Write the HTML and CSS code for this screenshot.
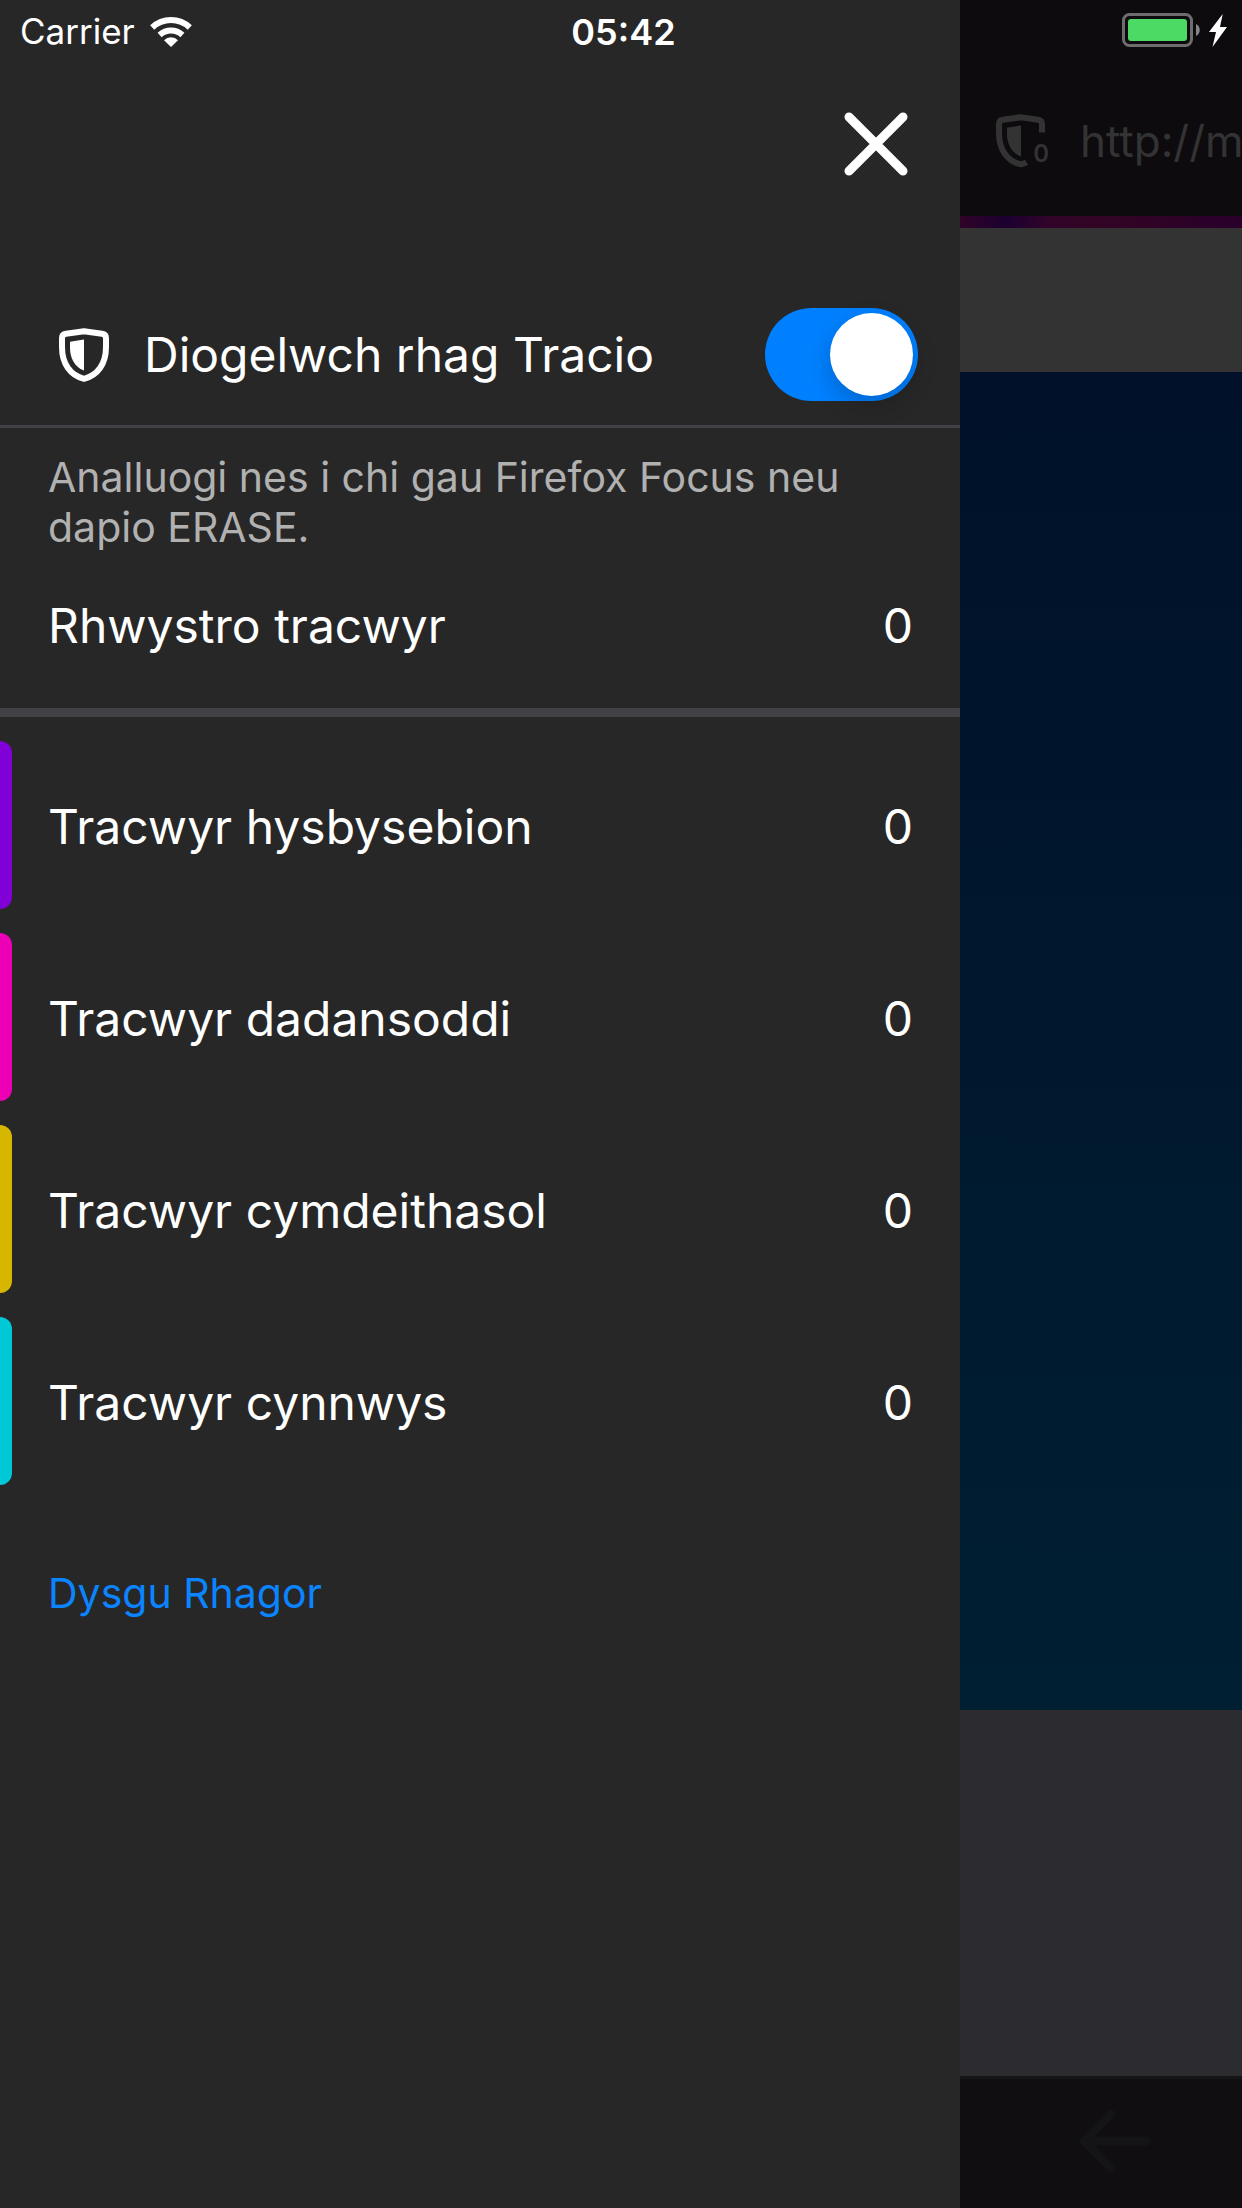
FILE: index.html
```html
<!DOCTYPE html>
<html lang="cy">
<head>
<meta charset="utf-8">
<meta name="viewport" content="width=device-width, initial-scale=1">
<title>Diogelwch rhag Tracio</title>
<link rel="stylesheet" href="styles.css">
</head>
<body>
<div class="app">
  <header class="status">
    <div class="status-left">
      <span>Carrier</span>
      <svg class="wifi" viewBox="0 0 42 31" aria-hidden="true">
        <g fill="none" stroke="#fff" stroke-width="6">
          <path d="M2.200 11.500A27.500 27.500 0 0 1 39.800 11.500"/>
          <path d="M9.600 19A17 17 0 0 1 32.400 19"/>
        </g>
        <path fill="#fff" d="M14 24.200a10 10 0 0 1 14 0L21 31z"/>
      </svg>
    </div>
    <time class="clock">05:42</time>
    <div class="status-right">
      <svg class="battery" viewBox="0 0 78 34" aria-hidden="true">
        <rect x="1.500" y="1.500" width="68" height="31" rx="6" fill="none" stroke="#6e6d6e" stroke-width="3"/>
        <rect x="6" y="6" width="59" height="22" rx="3" fill="#4cd964"/>
        <path fill="#868586" d="M74 11c5 2 5 10 0 12z"/>
      </svg>
      <svg class="bolt" viewBox="0 0 18 33" aria-hidden="true">
        <path fill="#fff" d="M13.700 0 0 18h7L3.500 33 18 13h-7z"/>
      </svg>
    </div>
  </header>

  <aside class="drawer">
    <div class="drawer-head">
      <button class="close" type="button" aria-label="Cau">
        <svg viewBox="0 0 64 64" aria-hidden="true"><path d="M5 5l54 54M59 5L5 59" fill="none" stroke="#fff" stroke-width="9" stroke-linecap="round"/></svg>
      </button>
    </div>

    <div class="protection">
      <svg class="shield" viewBox="0 0 50 54" aria-hidden="true">
        <path fill="none" stroke="#fff" stroke-width="6" stroke-linejoin="round" d="M25 3.200 43 5.700Q47 6.200 47 10V19C47 36 38.500 47.500 25 50.800 11.500 47.500 3 36 3 19V10Q3 6.200 7 5.700Z"/>
        <path fill="#fff" d="M25 11.500V42.500C15 39 11 29 11 20V13.700z"/>
      </svg>
      <label class="protection-label" for="tracking">Diogelwch rhag Tracio</label>
      <input class="switch" id="tracking" type="checkbox" role="switch" checked>
    </div>

    <p class="note">Analluogi nes i chi gau Firefox Focus neu dapio ERASE.</p>

    <div class="row total"><span>Rhwystro tracwyr</span><span>0</span></div>

    <ul class="trackers">
      <li class="row ads"><span>Tracwyr hysbysebion</span><span>0</span></li>
      <li class="row analytics"><span>Tracwyr dadansoddi</span><span>0</span></li>
      <li class="row social"><span>Tracwyr cymdeithasol</span><span>0</span></li>
      <li class="row content"><span>Tracwyr cynnwys</span><span>0</span></li>
    </ul>

    <div class="more"><a href="#">Dysgu Rhagor</a></div>
  </aside>

  <main class="browser">
    <div class="urlbar">
      <span class="blocked">
        <svg viewBox="0 0 50 54" aria-hidden="true">
          <path fill="none" stroke="#333" stroke-width="6" stroke-linejoin="round" d="M46 18.500V10Q46 6.200 42 5.700L25 3.200 7 5.700Q3 6.200 3 10V19C3 36 11.500 47.500 25 50.300Q28 49.700 30.500 48.200"/>
          <path fill="#333" d="M25 11.500V42.500C15 39 11 29 11 20V13.700z"/>
        </svg>
        <span class="blocked-count">0</span>
      </span>
      <input class="url" type="text" value="http://m" aria-label="URL" readonly>
    </div>
    <div class="progress"></div>
    <div class="page-top"></div>
    <div class="page-hero"></div>
    <div class="page-rest"></div>
    <nav class="toolbar">
      <button class="back" type="button" aria-label="Nôl">
        <svg viewBox="0 0 72 64" aria-hidden="true"><path d="M32 5 5 32 32 59M5 32H67" fill="none" stroke="#141315" stroke-width="9" stroke-linecap="round" stroke-linejoin="round"/></svg>
      </button>
    </nav>
  </main>
</div>
</body>
</html>
```
FILE: styles.css
```css
* {
  box-sizing: border-box;
}

body {
  margin: 0;
  background: #272727;
  color: #fff;
  font-family: Inter, "Liberation Sans", sans-serif;
  font-size: 48px;
}

svg {
  display: block;
  flex: none;
}

button {
  padding: 0;
  border: 0;
  background: none;
}

.app {
  position: relative;
  display: grid;
  grid-template-columns: minmax(0, 1fr) 282px;
  min-height: 100vh;
  overflow: hidden;
}

/* Status bar, over both the drawer and the page */
.status {
  position: absolute;
  top: 0;
  left: 0;
  right: 0;
  display: grid;
  grid-template-columns: 1fr auto 1fr;
  align-items: center;
  height: 60px;
  padding: 0 15px 0 20px;
  font-size: 35px;
}

.status-left,
.status-right {
  display: flex;
  align-items: center;
}

.status-left {
  gap: 15px;
}

.status-right {
  justify-content: flex-end;
  gap: 9px;
}

.wifi {
  width: 42px;
  height: 31px;
}

.clock {
  font-size: 36px;
  font-weight: 600;
  padding-top: 3px;
}

.battery {
  width: 78px;
  height: 34px;
}

.bolt {
  width: 18px;
  height: 33px;
}

.status-left {
  padding-top: 2px;
}

/* Drawer */
.drawer {
  display: flex;
  flex-direction: column;
  padding-top: 60px;
}

.drawer-head {
  display: flex;
  align-items: center;
  justify-content: flex-end;
  height: 168px;
  margin-bottom: 54px;
  padding-right: 52px;
}

.close svg {
  width: 64px;
  height: 64px;
}

.protection {
  display: flex;
  align-items: center;
  height: 146px;
  padding: 2px 42px 0 59px;
  border-bottom: 3px solid #424146;
}

.shield {
  width: 50px;
  height: 54px;
}

.protection-label {
  flex: 1;
  padding-left: 35px;
}

.switch {
  appearance: none;
  display: flex;
  align-items: center;
  flex: none;
  width: 153px;
  height: 93px;
  margin: 0;
  padding: 0 5px;
  border-radius: 47px;
  background: #39393d;
}

.switch::before {
  content: "";
  width: 83px;
  height: 83px;
  border-radius: 50%;
  background: #fff;
  box-shadow: 0 9px 24px rgba(0, 0, 0, 0.2);
}

.switch:checked {
  justify-content: flex-end;
  background: #0080ff;
}

.note {
  margin: 0;
  padding: 24px 48px 0;
  color: #b1b1b1;
  font-size: 41px;
  line-height: 50px;
}

.row {
  display: flex;
  align-items: center;
  justify-content: space-between;
  padding: 2px 47px 0 48px;
}

.total {
  height: 156px;
  padding-bottom: 12px;
}

.trackers {
  margin: 0;
  padding: 12px 0 0;
  border-top: 9px solid #424146;
  list-style: none;
}

.trackers .row {
  height: 168px;
  margin: 12px 0 24px;
  padding-top: 0;
  padding-left: 0;
}

.trackers .row:last-child {
  margin-bottom: 12px;
}

.trackers .row::before {
  content: "";
  align-self: stretch;
  width: 12px;
  border-radius: 0 12px 12px 0;
  background: var(--tint);
}

.trackers .row span {
  padding-top: 2px;
}

.trackers .row span:first-of-type {
  flex: 1;
  padding-left: 36px;
}

.ads {
  --tint: #8000d7;
}

.analytics {
  --tint: #ed00b5;
}

.social {
  --tint: #d7b600;
}

.content {
  --tint: #00c8d7;
}

.more {
  display: flex;
  align-items: center;
  height: 192px;
  padding: 0 48px;
  font-size: 41px;
}

.more a {
  color: #0a84ff;
  text-decoration: none;
}

/* Dimmed page behind the drawer */
.browser {
  display: flex;
  flex-direction: column;
  overflow: hidden;
  background: #0d0b0e;
}

.urlbar {
  display: flex;
  align-items: center;
  height: 216px;
  padding: 66px 0 0 36px;
}

.blocked {
  position: relative;
  flex: none;
}

.blocked svg {
  width: 50px;
  height: 54px;
}

.blocked-count {
  position: absolute;
  right: -3px;
  bottom: 2px;
  color: #333;
  font-size: 24px;
  font-weight: 600;
  line-height: 24px;
}

.url {
  flex: 1;
  min-width: 0;
  margin-left: 34px;
  padding: 0;
  border: 0;
  background: none;
  color: #333;
  font: inherit;
  font-size: 44px;
}

.progress {
  height: 12px;
  background: linear-gradient(90deg, #310328, #1b0030 16%, #32042a 32%, #330424 50%, #29002b);
}

.page-top {
  height: 144px;
  background: #333;
}

.page-hero {
  height: 1338px;
  background: linear-gradient(#001129, #001f32);
}

.page-rest {
  flex: 1;
  background: #2c2b2f;
}

.toolbar {
  display: flex;
  align-items: center;
  height: 132px;
  padding: 0 0 6px 119px;
  border-top: 3px solid #161517;
  background: #100e10;
}

.back svg {
  width: 72px;
  height: 64px;
}
```
